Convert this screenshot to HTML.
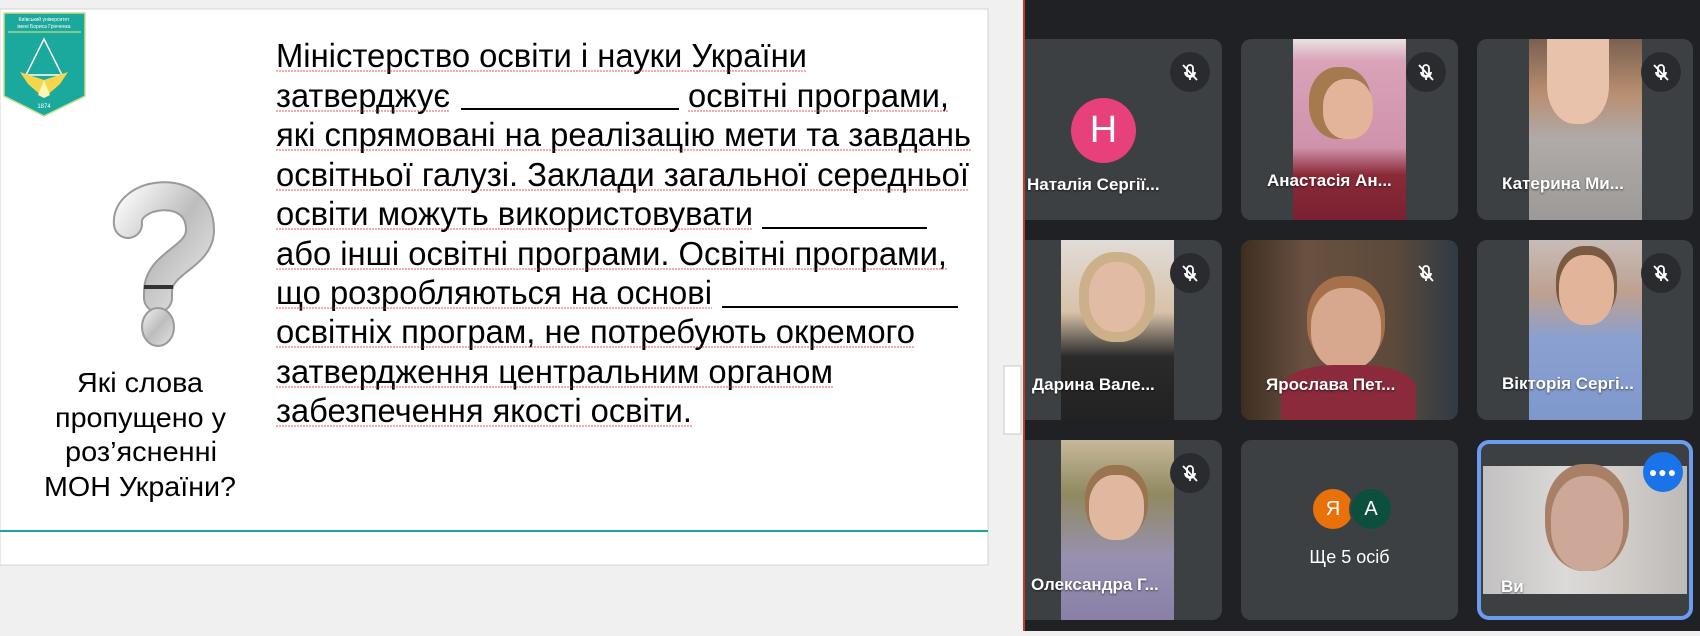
<!DOCTYPE html>
<html><head><meta charset="utf-8"><style>
*{margin:0;padding:0;box-sizing:border-box}
body{width:1700px;height:631px;overflow:hidden;background:#f0f0f0;position:relative;font-family:"Liberation Sans",sans-serif}
.left{position:absolute;left:0;top:0;width:1023px;height:631px}
.right{position:absolute;left:1023px;top:0;width:677px;height:631px;background:#202124;border-left:2px solid #c0392b;overflow:hidden}
.tile{position:absolute;background:#3c4043;border-radius:10px;overflow:hidden}
.vid{position:absolute;top:0;bottom:0}
.mic{position:absolute;width:40px;height:40px;border-radius:50%;background:#2a2b2f;top:13px;right:12px;display:flex;align-items:center;justify-content:center}
.name{position:absolute;color:#fff;font-weight:bold;font-size:17px;white-space:nowrap;text-shadow:0 1px 2px rgba(0,0,0,.6)}
</style></head><body>
<div class="left">
<svg width="1023" height="631" viewBox="0 0 1023 631" font-family="Liberation Sans, sans-serif">
<rect x="0" y="0" width="1023" height="631" fill="#f0f0f0"/>
<rect x="0" y="9" width="988" height="556" fill="#fff" stroke="#d4d4d4" stroke-width="1"/>
<line x1="0" y1="531" x2="988" y2="531" stroke="#1aa7a0" stroke-width="2"/>
<rect x="1004" y="366" width="17" height="68" fill="#fff" stroke="#c8c8c8"/>
<!-- logo -->
<path d="M4 13 H85 V96 L44 116 L4 96 Z" fill="#1aa99c" stroke="#c8e08a" stroke-width="1.5"/>
<line x1="8" y1="32" x2="81" y2="32" stroke="#f3e27a" stroke-width="1"/>
<text x="44" y="21" font-size="5" fill="#fff" text-anchor="middle">Київський університет</text>
<text x="44" y="28" font-size="5" fill="#fff" text-anchor="middle">імені Бориса Грінченка</text>
<path d="M44 39 L62 75 H26 Z" fill="none" stroke="#fff" stroke-width="1.5"/>
<path d="M20 72 L44 80 L68 72 L60 84 L44 98 L28 84 Z" fill="#f5d54a"/>
<path d="M44 80 L50 95 L44 98 L38 95 Z" fill="#fff6b0"/>
<text x="44" y="108" font-size="6" fill="#fff" text-anchor="middle">1874</text>
<!-- question mark -->
<defs><linearGradient id="qg" x1="0" y1="0" x2="1" y2="1"><stop offset="0" stop-color="#f4f4f4"/><stop offset=".5" stop-color="#bdbdbd"/><stop offset="1" stop-color="#e2e2e2"/></linearGradient></defs>
<path d="M128 224 C124 192, 200 180, 200 230 C200 258, 158 262, 158 292 V298" fill="none" stroke="#9a9a9a" stroke-width="30" stroke-linecap="round"/>
<path d="M128 224 C124 192, 200 180, 200 230 C200 258, 158 262, 158 292 V298" fill="none" stroke="url(#qg)" stroke-width="26" stroke-linecap="round"/>
<rect x="144" y="285" width="29" height="4" fill="#333"/>
<ellipse cx="158" cy="327" rx="16" ry="19" fill="url(#qg)" stroke="#9a9a9a" stroke-width="2"/>
<!-- question caption -->
<g font-size="28" fill="#000" text-anchor="start">
<text x="77" y="392" textLength="126" lengthAdjust="spacingAndGlyphs">Які слова</text>
<text x="55" y="427" textLength="171" lengthAdjust="spacingAndGlyphs">пропущено у</text>
<text x="65" y="461" textLength="152" lengthAdjust="spacingAndGlyphs">роз’ясненні</text>
<text x="44" y="496" textLength="192" lengthAdjust="spacingAndGlyphs">МОН України?</text>
</g>
<!-- main text -->
<g font-size="33" fill="#000">
<text x="276" y="67" textLength="531" lengthAdjust="spacingAndGlyphs">Міністерство освіти і науки України</text>
<text x="276" y="107" textLength="174" lengthAdjust="spacingAndGlyphs">затверджує</text>
<text x="688" y="107" textLength="261" lengthAdjust="spacingAndGlyphs">освітні програми,</text>
<text x="276" y="146" textLength="695" lengthAdjust="spacingAndGlyphs">які спрямовані на реалізацію мети та завдань</text>
<text x="276" y="186" textLength="693" lengthAdjust="spacingAndGlyphs">освітньої галузі. Заклади загальної середньої</text>
<text x="276" y="225" textLength="477" lengthAdjust="spacingAndGlyphs">освіти можуть використовувати</text>
<text x="276" y="265" textLength="671" lengthAdjust="spacingAndGlyphs">або інші освітні програми. Освітні програми,</text>
<text x="276" y="304" textLength="436" lengthAdjust="spacingAndGlyphs">що розробляються на основі</text>
<text x="276" y="343" textLength="639" lengthAdjust="spacingAndGlyphs">освітніх програм, не потребують окремого</text>
<text x="276" y="383" textLength="557" lengthAdjust="spacingAndGlyphs">затвердження центральним органом</text>
<text x="276" y="422" textLength="416" lengthAdjust="spacingAndGlyphs">забезпечення якості освіти.</text>
</g>
<g stroke="#000" stroke-width="2">
<line x1="461" y1="109" x2="679" y2="109"/>
<line x1="762" y1="228" x2="927" y2="228"/>
<line x1="722" y1="307" x2="958" y2="307"/>
</g>
<g stroke="#e03030" stroke-width="1" stroke-dasharray="2 1" opacity=".8">
<line x1="276" y1="71" x2="807" y2="71"/>
<line x1="276" y1="111" x2="450" y2="111"/><line x1="688" y1="111" x2="949" y2="111"/>
<line x1="276" y1="150" x2="971" y2="150"/>
<line x1="276" y1="190" x2="969" y2="190"/>
<line x1="276" y1="229" x2="753" y2="229"/>
<line x1="276" y1="269" x2="947" y2="269"/>
<line x1="276" y1="308" x2="712" y2="308"/>
<line x1="276" y1="347" x2="915" y2="347"/>
<line x1="276" y1="387" x2="833" y2="387"/>
<line x1="276" y1="426" x2="692" y2="426"/>
</g>
</svg>
</div>
<div class="right">
<svg width="0" height="0" style="position:absolute"><defs><g id="m"><path d="M10 3a3 3 0 0 1 3 3v5a3 3 0 0 1-6 0V6a3 3 0 0 1 3-3zM5 10a5 5 0 0 0 10 0M10 15v3" fill="none" stroke="#fff" stroke-width="1.8"/><line x1="3" y1="3" x2="17" y2="18" stroke="#fff" stroke-width="1.8"/></g></defs></svg>
<!-- row1 -->
<div class="tile" style="left:-10px;top:39px;width:207px;height:181px">
<div style="position:absolute;left:56px;top:59px;width:65px;height:65px;border-radius:50%;background:#e8407a;color:#fff;font-size:38px;display:flex;align-items:center;justify-content:center">Н</div>
<div class="mic"><svg width="20" height="20"><use href="#m"/></svg></div>
<div class="name" style="left:12px;top:136px">Наталія Сергії...</div></div>
<div class="tile" style="left:216px;top:39px;width:217px;height:181px">
<div class="vid" style="left:52px;width:113px;background:linear-gradient(#e8e3e0 0,#d9a3b8 12%,#cf92ab 60%,#8a2a38 75%,#7a2030 100%)"><div style="position:absolute;left:30px;top:40px;width:50px;height:60px;border-radius:45%;background:#e3b49a;box-shadow:-8px -6px 0 6px #a67a4f"></div></div>
<div class="mic"><svg width="20" height="20"><use href="#m"/></svg></div>
<div class="name" style="left:26px;top:132px">Анастасія Ан...</div></div>
<div class="tile" style="left:452px;top:39px;width:216px;height:181px">
<div class="vid" style="left:52px;width:113px;background:linear-gradient(#7a6050 0,#b98e70 30%,#b0aaa8 55%,#9c9a98 100%)"><div style="position:absolute;left:18px;top:0;width:62px;height:85px;border-radius:0 0 45% 45%;background:#e8c2aa"></div></div>
<div class="mic"><svg width="20" height="20"><use href="#m"/></svg></div>
<div class="name" style="left:25px;top:135px">Катерина Ми...</div></div>
<!-- row2 -->
<div class="tile" style="left:-10px;top:240px;width:207px;height:180px">
<div class="vid" style="left:46px;width:113px;background:linear-gradient(#e0dcd8 0,#d8c2a8 40%,#2a2a2a 65%,#222 100%)"><div style="position:absolute;left:28px;top:22px;width:56px;height:70px;border-radius:45%;background:#e2bba4;box-shadow:0 0 0 10px #cbb08a"></div></div>
<div class="mic"><svg width="20" height="20"><use href="#m"/></svg></div>
<div class="name" style="left:17px;top:135px">Дарина Вале...</div></div>
<div class="tile" style="left:216px;top:240px;width:217px;height:180px;background:linear-gradient(90deg,#3e2e22,#6a5040 30%,#5d4a3a 70%,#2f3a45)">
<div style="position:absolute;left:70px;top:48px;width:70px;height:82px;border-radius:45%;background:#d8a88e;box-shadow:0 -8px 0 4px #a6704a"></div>
<div style="position:absolute;left:40px;top:125px;width:135px;height:60px;border-radius:40% 40% 0 0;background:#8a2a3a"></div>
<div class="mic" style="background:transparent"><svg width="20" height="20"><use href="#m"/></svg></div>
<div class="name" style="left:25px;top:135px">Ярослава Пет...</div></div>
<div class="tile" style="left:452px;top:240px;width:216px;height:180px">
<div class="vid" style="left:52px;width:113px;background:linear-gradient(#c8bcb8 0,#bda090 30%,#8aa0d0 55%,#7f98cc 100%)"><div style="position:absolute;left:30px;top:15px;width:55px;height:70px;border-radius:45%;background:#e2b49a;box-shadow:0 -6px 0 3px #7a5a40"></div></div>
<div class="mic"><svg width="20" height="20"><use href="#m"/></svg></div>
<div class="name" style="left:25px;top:134px">Вікторія Сергі...</div></div>
<!-- row3 -->
<div class="tile" style="left:-10px;top:440px;width:207px;height:180px">
<div class="vid" style="left:46px;width:113px;background:linear-gradient(#c8b89a 0,#8f8a60 30%,#9890b0 65%,#8a80a8 100%)"><div style="position:absolute;left:28px;top:35px;width:55px;height:65px;border-radius:45%;background:#e0b8a0;box-shadow:0 -6px 0 4px #9a7450"></div></div>
<div class="mic"><svg width="20" height="20"><use href="#m"/></svg></div>
<div class="name" style="left:16px;top:135px">Олександра Г...</div></div>
<div class="tile" style="left:216px;top:440px;width:217px;height:180px">
<div style="position:absolute;left:70px;top:47px;width:44px;height:44px;border-radius:50%;background:#e8710a;border:2px solid #3c4043;color:#fff;font-size:20px;display:flex;align-items:center;justify-content:center">Я</div>
<div style="position:absolute;left:108px;top:47px;width:44px;height:44px;border-radius:50%;background:#0d4f3f;border:2px solid #3c4043;color:#fff;font-size:20px;display:flex;align-items:center;justify-content:center">А</div>
<div style="position:absolute;left:0;width:217px;top:107px;text-align:center;color:#fff;font-size:18px">Ще 5 осіб</div></div>
<div class="tile" style="left:452px;top:440px;width:216px;height:180px;background:#3c4043;border:4px solid #6b9cf0;border-radius:12px">
<div style="position:absolute;left:2px;right:2px;top:22px;height:128px;background:linear-gradient(90deg,#c2c0c0,#dcdad8 40%,#d0ccc8 70%,#bcbab8)"><div style="position:absolute;left:68px;top:10px;width:72px;height:95px;border-radius:45%;background:#cda898;box-shadow:0 -6px 0 6px #a88068"></div></div>
<div style="position:absolute;right:6px;top:8px;width:40px;height:40px;border-radius:50%;background:#1a73e8;color:#fff;font-size:14px;font-weight:bold;display:flex;align-items:center;justify-content:center;letter-spacing:1px">●●●</div>
<div class="name" style="left:20px;top:133px">Ви</div></div>
</div>
</body></html>
